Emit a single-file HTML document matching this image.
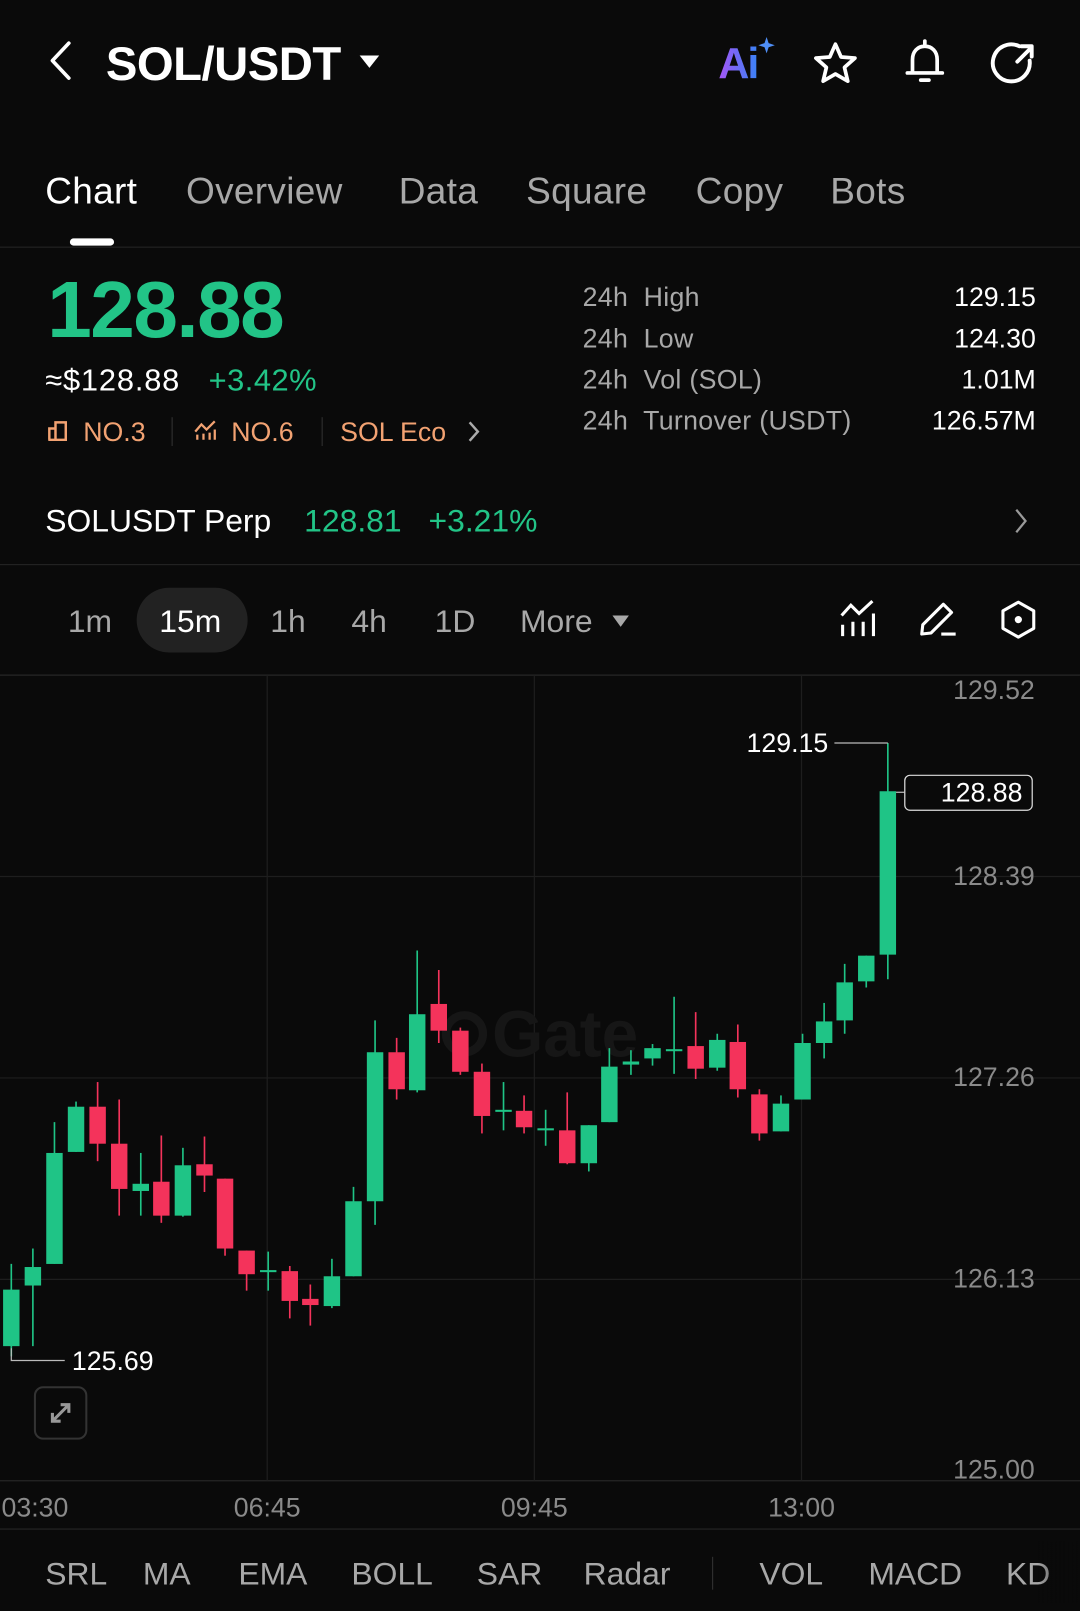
<!DOCTYPE html>
<html><head><meta charset="utf-8"><style>
html,body{margin:0;padding:0;background:#0a0a0a;overflow:hidden}
body{width:1080px;height:1611px}
#w{position:absolute;left:0;top:0;width:1051px;height:1568px;transform:scale(1.02759);transform-origin:0 0;font-family:"Liberation Sans",sans-serif;color:#fff}
.a{position:absolute;white-space:nowrap}
.g{color:#22c487}.gr{color:#a8a8a8}.o{color:#f2a272}
.t{font-size:36px;letter-spacing:0.3px;top:165px}
</style></head><body><div id="w">
<!-- header -->
<svg class="a" style="left:40px;top:38px" width="40" height="44"><path d="M27 4 L11 21 L27 38" stroke="#fff" stroke-width="3.5" fill="none" stroke-linecap="round" stroke-linejoin="round"/></svg>
<div class="a" style="left:103px;top:35px;font-size:46px;font-weight:bold;letter-spacing:-0.5px">SOL/USDT</div>
<svg class="a" style="left:349px;top:52px" width="22" height="16"><path d="M1 2 H20 L10.5 14 Z" fill="#fff"/></svg>
<div class="a" style="left:699px;top:38px;font-size:42px;font-weight:bold;background:linear-gradient(90deg,#a855f7,#6d6cf5,#3b82f6);-webkit-background-clip:text;color:transparent;letter-spacing:-2px">Ai</div>
<svg class="a" style="left:738px;top:36px" width="16" height="16"><path d="M8 0 L10 6 L16 8 L10 10 L8 16 L6 10 L0 8 L6 6Z" fill="#4f8ff7"/></svg>
<svg class="a" style="left:789px;top:39px" width="48" height="46"><path d="M24 4 L29.5 16.5 L43 17.5 L32.8 26.6 L36 40 L24 33 L12 40 L15.2 26.6 L5 17.5 L18.5 16.5Z" stroke="#fff" stroke-width="3.6" fill="none" stroke-linejoin="round"/></svg>
<svg class="a" style="left:876px;top:36px" width="48" height="50"><path d="M24 4 V8 M12 34 V22 C12 14 17 9 24 9 C31 9 36 14 36 22 V34 M7 35 H41 M20 42 H28" stroke="#fff" stroke-width="3.6" fill="none" stroke-linecap="round"/></svg>
<svg class="a" style="left:962px;top:38px" width="48" height="48"><path d="M30 7 A18 18 0 1 0 40 21" stroke="#fff" stroke-width="3.8" fill="none" stroke-linecap="round"/><path d="M28 22 L41 9 M32 7 H42 V17" stroke="#fff" stroke-width="3.8" fill="none" stroke-linecap="round" stroke-linejoin="round"/></svg>
<!-- tabs -->
<div class="a t" style="left:44px">Chart</div>
<div class="a gr t" style="left:181px">Overview</div>
<div class="a gr t" style="left:388px">Data</div>
<div class="a gr t" style="left:512px">Square</div>
<div class="a gr t" style="left:677px">Copy</div>
<div class="a gr t" style="left:808px">Bots</div>
<div class="a" style="left:68px;top:232px;width:43px;height:7px;border-radius:4px;background:#fff"></div>
<div class="a" style="left:0;top:240px;width:1051px;height:1px;background:#262626"></div>
<!-- price -->
<div class="a g" style="left:46px;top:256px;font-size:78px;font-weight:bold;letter-spacing:-1.5px">128.88</div>
<div class="a" style="left:44px;top:354px;font-size:30px;letter-spacing:0.8px">≈$128.88</div>
<div class="a g" style="left:203px;top:354px;font-size:30px;letter-spacing:0.5px">+3.42%</div>
<svg class="a" style="left:45px;top:408px" width="22" height="22"><path d="M3 20 V9 H9 V20 M9 20 V3 H19 V20 H2" stroke="#f2a272" stroke-width="2.4" fill="none"/></svg>
<div class="a o" style="left:81px;top:405px;font-size:26px">NO.3</div>
<div class="a" style="left:167px;top:406px;width:1px;height:28px;background:#333"></div>
<svg class="a" style="left:188px;top:408px" width="24" height="22"><path d="M2 12 L8 5 L13 10 L21 2 M4 20 V15 M10 20 V14 M16 20 V13 M21 20 V10" stroke="#f2a272" stroke-width="2.2" fill="none"/></svg>
<div class="a o" style="left:225px;top:405px;font-size:26px">NO.6</div>
<div class="a" style="left:313px;top:406px;width:1px;height:28px;background:#333"></div>
<div class="a o" style="left:331px;top:405px;font-size:26px">SOL Eco</div>
<svg class="a" style="left:452px;top:408px" width="18" height="24"><path d="M5 3 L13 12 L5 21" stroke="#aaa" stroke-width="2.4" fill="none"/></svg>
<!-- stats -->
<div class="a gr" style="left:567px;top:269px;font-size:26px;line-height:40px;letter-spacing:0.3px">24h&nbsp; High<br>24h&nbsp; Low<br>24h&nbsp; Vol (SOL)<br>24h&nbsp; Turnover (USDT)</div>
<div class="a" style="right:43px;top:269px;font-size:26px;line-height:40px;text-align:right">129.15<br>124.30<br>1.01M<br>126.57M</div>
<!-- perp -->
<div class="a" style="left:44px;top:489px;font-size:31px">SOLUSDT Perp</div>
<div class="a g" style="left:296px;top:489px;font-size:31px">128.81</div>
<div class="a g" style="left:417px;top:489px;font-size:31px">+3.21%</div>
<svg class="a" style="left:985px;top:493px" width="18" height="28"><path d="M4 3 L13 14 L4 25" stroke="#999" stroke-width="2.2" fill="none"/></svg>
<div class="a" style="left:0;top:549px;width:1051px;height:1px;background:#262626"></div>
<!-- timeframe -->
<div class="a" style="left:133px;top:572px;width:108px;height:63px;border-radius:32px;background:#222"></div>
<div class="a gr" style="left:66px;top:587px;font-size:31px">1m</div>
<div class="a" style="left:155px;top:587px;font-size:31px">15m</div>
<div class="a gr" style="left:263px;top:587px;font-size:31px">1h</div>
<div class="a gr" style="left:342px;top:587px;font-size:31px">4h</div>
<div class="a gr" style="left:423px;top:587px;font-size:31px">1D</div>
<div class="a gr" style="left:506px;top:587px;font-size:31px">More</div>
<svg class="a" style="left:595px;top:598px" width="18" height="14"><path d="M1 1 H17 L9 12Z" fill="#a8a8a8"/></svg>
<svg class="a" style="left:816px;top:583px" width="38" height="40"><path d="M3 16 L12 6 L20 14 L33 2 M4 25 V36 M14 22 V36 M24 22 V36 M34 14 V36" stroke="#fff" stroke-width="3" fill="none"/></svg>
<svg class="a" style="left:894px;top:584px" width="40" height="38"><path d="M3 33 L4 24 L24 4 L32 12 L12 32 Z M22 33 H36" stroke="#fff" stroke-width="3" fill="none" stroke-linejoin="round"/></svg>
<svg class="a" style="left:972px;top:583px" width="38" height="40"><path d="M19 3 L34 11.5 V28.5 L19 37 L4 28.5 V11.5Z" stroke="#fff" stroke-width="3" fill="none" stroke-linejoin="round"/><circle cx="19" cy="20" r="3.5" fill="#fff"/></svg>
<!-- chart -->
<svg class="a" style="left:0;top:0" width="1051" height="1568">
<g stroke="#1e1e1e" stroke-width="1.2">
<line x1="0" y1="657" x2="1051" y2="657" stroke="#262626"/>
<line x1="0" y1="853" x2="1051" y2="853"/><line x1="0" y1="1049" x2="1051" y2="1049"/><line x1="0" y1="1245" x2="1051" y2="1245"/>
<line x1="0" y1="1441" x2="1051" y2="1441" stroke="#262626"/>
<line x1="260" y1="657" x2="260" y2="1441"/><line x1="520" y1="657" x2="520" y2="1441"/><line x1="780" y1="657" x2="780" y2="1441"/>
<line x1="0" y1="1488" x2="1051" y2="1488" stroke="#262626"/>
</g>
<circle cx="452" cy="1006" r="18" fill="none" stroke="#161616" stroke-width="8"/>
<text x="550" y="1028" font-family="Liberation Sans" font-weight="bold" font-size="64" fill="#161616" text-anchor="middle">Gate</text>
<g id="c"></g>
<g font-family="Liberation Sans" font-size="26" fill="#8a8a8a" text-anchor="end">
<text x="1007" y="680">129.52</text><text x="1007" y="861">128.39</text><text x="1007" y="1057">127.26</text><text x="1007" y="1253">126.13</text><text x="1007" y="1439">125.00</text>
</g>
<g font-family="Liberation Sans" font-size="26" fill="#8a8a8a" text-anchor="middle">
<text x="34" y="1476">03:30</text><text x="260" y="1476">06:45</text><text x="520" y="1476">09:45</text><text x="780" y="1476">13:00</text>
</g>
<path d="M864 723 H812" stroke="#bbb" stroke-width="1.2"/>
<text x="806" y="732" font-family="Liberation Sans" font-size="26" fill="#fff" text-anchor="end">129.15</text>
<path d="M872 771 H880" stroke="#bbb" stroke-width="1.2"/>
<rect x="880.5" y="754.5" width="124" height="34" rx="5" fill="#0a0a0a" stroke="#ddd" stroke-width="1.2"/>
<text x="995" y="780" font-family="Liberation Sans" font-size="26" fill="#fff" text-anchor="end">128.88</text>
<path d="M11 1312 V1324 H63" stroke="#bbb" stroke-width="1.2" fill="none"/>
<text x="70" y="1333" font-family="Liberation Sans" font-size="26" fill="#fff">125.69</text>
<rect x="34" y="1350" width="50" height="50" rx="8" fill="none" stroke="#333" stroke-width="2"/>
<path d="M51 1383 L67 1367 M59 1367 H67 V1375 M51 1375 V1383 H59" stroke="#999" stroke-width="3" fill="none"/>
</svg>
<!-- indicators -->
<div class="a gr" style="left:44px;top:1514px;font-size:31px">SRL</div>
<div class="a gr" style="left:139px;top:1514px;font-size:31px">MA</div>
<div class="a gr" style="left:232px;top:1514px;font-size:31px">EMA</div>
<div class="a gr" style="left:342px;top:1514px;font-size:31px">BOLL</div>
<div class="a gr" style="left:464px;top:1514px;font-size:31px">SAR</div>
<div class="a gr" style="left:568px;top:1514px;font-size:31px">Radar</div>
<div class="a" style="left:693px;top:1515px;width:1px;height:32px;background:#333"></div>
<div class="a gr" style="left:739px;top:1514px;font-size:31px">VOL</div>
<div class="a gr" style="left:845px;top:1514px;font-size:31px">MACD</div>
<div class="a gr" style="left:979px;top:1514px;font-size:31px">KD</div>
<div class="a" style="left:1010px;top:1500px;width:41px;height:60px;background:linear-gradient(90deg,rgba(10,10,10,0),#0a0a0a)"></div>
</div>
<script>
var d=[[11,'g',1255,1310,1230,1320],[32,'g',1233,1251,1215,1310],[53,'g',1122,1230,1092,1230],[74,'g',1077,1121,1072,1121],[95,'r',1077,1113,1053,1130],[116,'r',1113,1157,1070,1183],[137,'g',1152,1159,1122,1183],[157,'r',1150,1183,1105,1190],[178,'g',1134,1183,1117,1184],[199,'r',1133,1144,1106,1160],[219,'r',1147,1215,1147,1222],[240,'r',1217,1240,1217,1256],[261,'g',1236,1238,1218,1256],[282,'r',1237,1266,1232,1283],[302,'r',1264,1270,1250,1290],[323,'g',1242,1271,1225,1273],[344,'g',1169,1242,1155,1242],[365,'g',1024,1169,993,1192],[386,'r',1024,1060,1010,1070],[406,'g',987,1061,925,1063],[427,'r',977,1003,944,1015],[448,'r',1003,1043,1000,1046],[469,'r',1043,1086,1035,1103],[490,'g',1080,1082,1053,1100],[510,'r',1081,1097,1066,1103],[531,'g',1098,1100,1080,1115],[552,'r',1100,1132,1063,1133],[573,'g',1095,1132,1095,1140],[593,'g',1038,1092,1020,1092],[614,'g',1033,1036,1022,1046],[635,'g',1020,1030,1016,1037],[656,'g',1021,1023,970,1045],[677,'r',1018,1040,985,1050],[698,'g',1012,1039,1006,1042],[718,'r',1014,1060,997,1068],[739,'r',1065,1103,1060,1110],[760,'g',1074,1101,1066,1101],[781,'g',1015,1070,1006,1070],[802,'g',994,1015,976,1030],[822,'g',956,993,938,1006],[843,'g',930,955,930,961],[864,'g',770,929,723,953]];
var s='';d.forEach(function(c){var col=c[1]=='g'?'#1fc486':'#f4335b';s+='<line x1="'+c[0]+'" x2="'+c[0]+'" y1="'+c[4]+'" y2="'+c[5]+'" stroke="'+col+'" stroke-width="1.6"/><rect x="'+(c[0]-8)+'" y="'+c[2]+'" width="16" height="'+Math.max(2,c[3]-c[2])+'" fill="'+col+'"/>';});
document.getElementById('c').innerHTML=s;
</script>
</body></html>
